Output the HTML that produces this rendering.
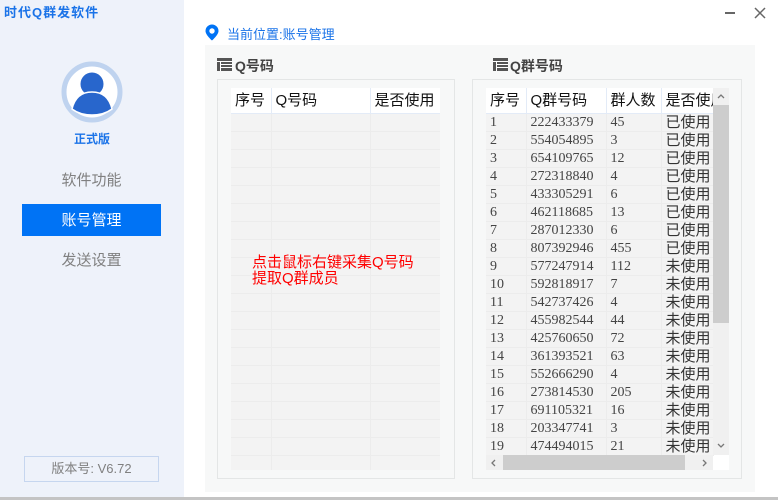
<!DOCTYPE html>
<html><head><meta charset="utf-8"><style>
*{margin:0;padding:0;box-sizing:border-box}
body{width:778px;height:500px;position:relative;overflow:hidden;background:#fff;font-family:"Liberation Sans","WenQuanYi Zen Hei","Noto Sans CJK SC",sans-serif}
.a{position:absolute}
.side{left:0;top:0;width:184px;height:497px;background:#eef2fa}
.nav{left:22px;width:139px;height:32px;line-height:33px;text-align:center;font-size:15px;color:#808080}
table{border-collapse:collapse;table-layout:fixed;font-family:"Liberation Serif","WenQuanYi Zen Hei",serif}
td,th{height:18px;font-size:14px;font-weight:normal;text-align:left;padding-left:4px;white-space:nowrap;overflow:hidden;color:#444;border-right:1px solid #ececec;border-bottom:1px solid #ececec;line-height:17px}
th{height:25px;background:#fff;color:#111;font-size:15px;border-right:1px solid #e3ebf7;border-bottom:1px solid #e3ebf7;font-family:"WenQuanYi Zen Hei",sans-serif}
td{background:#f3f3f3}
td.c{font-family:"WenQuanYi Zen Hei",sans-serif;font-size:15px;color:#333}
</style></head><body>
<div class="a side"></div>
<div class="a" style="left:4px;top:2px;font-size:13px;font-weight:bold;color:#1a73e8;letter-spacing:1px">时代Q群发软件</div>
<svg class="a" style="left:60px;top:60px" width="64" height="64" viewBox="0 0 64 64">
<circle cx="32" cy="32" r="28" fill="#fff" stroke="#bfd3ef" stroke-width="5"/>
<circle cx="32" cy="24" r="12.5" fill="#2866cc" stroke="#fff" stroke-width="2"/>
<path d="M12 49 Q16 32 32 32 Q48 32 52 49 Q44 55 32 55 Q20 55 12 49Z" fill="#2866cc" stroke="#fff" stroke-width="1.5"/>
</svg>
<div class="a" style="left:0;width:184px;top:130px;text-align:center;font-size:12px;font-weight:bold;color:#1a73e8">正式版</div>
<div class="a nav" style="top:164px">软件功能</div>
<div class="a nav" style="top:204px;background:#0073f5;color:#fff">账号管理</div>
<div class="a nav" style="top:244px">发送设置</div>
<div class="a" style="left:24px;top:456px;width:135px;height:26px;border:1px solid #c6d6ef;text-align:center;line-height:24px;font-size:13px;color:#808080">版本号: V6.72</div>
<div class="a" style="left:0;top:497px;width:778px;height:3px;background:#c4c4c4"></div>
<div class="a" style="left:725px;top:12px;width:10px;height:2px;background:#666"></div>
<svg class="a" style="left:754px;top:7px" width="12" height="12"><path d="M1 1L11 11M11 1L1 11" stroke="#666" stroke-width="1.5"/></svg>
<svg class="a" style="left:205px;top:24px" width="14" height="17" viewBox="0 0 14 17"><path d="M7 0.5A6.5 6.5 0 0 0 0.5 7C0.5 11 7 16.5 7 16.5S13.5 11 13.5 7A6.5 6.5 0 0 0 7 0.5Z" fill="#0073f5"/><circle cx="7" cy="7" r="2.7" fill="#fff"/></svg>
<div class="a" style="left:227px;top:24px;font-size:13px;color:#1a73e8">当前位置:账号管理</div>
<div class="a" style="left:205px;top:45px;width:550px;height:447px;background:#f7f8f8"></div>
<svg class="a" style="left:217px;top:58px" width="15" height="13"><rect width="15" height="13" fill="#555"/><rect x="0" y="3" width="15" height="1" fill="#fff"/><rect x="4" y="6" width="11" height="1" fill="#fff"/><rect x="4" y="9" width="11" height="1" fill="#fff"/><rect x="3" y="3" width="1" height="10" fill="#fff"/></svg>
<div class="a" style="left:235px;top:56px;font-size:14px;font-weight:bold;color:#444">Q号码</div>
<svg class="a" style="left:493px;top:58px" width="15" height="13"><rect width="15" height="13" fill="#555"/><rect x="0" y="3" width="15" height="1" fill="#fff"/><rect x="4" y="6" width="11" height="1" fill="#fff"/><rect x="4" y="9" width="11" height="1" fill="#fff"/><rect x="3" y="3" width="1" height="10" fill="#fff"/></svg>
<div class="a" style="left:510px;top:56px;font-size:14px;font-weight:bold;color:#444">Q群号码</div>
<div class="a" style="left:217px;top:79px;width:238px;height:400px;border:1px solid #e4e6e6"></div>
<div class="a" style="left:472px;top:79px;width:270px;height:400px;border:1px solid #e4e6e6"></div>
<div class="a" style="left:231px;top:88px;width:209px;height:382px;background:#f3f3f3;overflow:hidden">
<table style="width:210px"><colgroup><col style="width:40px"><col style="width:99px"><col style="width:71px"></colgroup>
<tr><th>序号</th><th>Q号码</th><th>是否使用</th></tr>
<tr><td></td><td></td><td></td></tr><tr><td></td><td></td><td></td></tr><tr><td></td><td></td><td></td></tr><tr><td></td><td></td><td></td></tr><tr><td></td><td></td><td></td></tr><tr><td></td><td></td><td></td></tr><tr><td></td><td></td><td></td></tr><tr><td></td><td></td><td></td></tr><tr><td></td><td></td><td></td></tr><tr><td></td><td></td><td></td></tr><tr><td></td><td></td><td></td></tr><tr><td></td><td></td><td></td></tr><tr><td></td><td></td><td></td></tr><tr><td></td><td></td><td></td></tr><tr><td></td><td></td><td></td></tr><tr><td></td><td></td><td></td></tr><tr><td></td><td></td><td></td></tr><tr><td></td><td></td><td></td></tr><tr><td></td><td></td><td></td></tr><tr><td></td><td></td><td></td></tr>
</table></div>
<div class="a" style="left:252px;top:255px;font-size:15px;line-height:16px;color:#f00;font-family:'WenQuanYi Zen Hei',sans-serif">点击鼠标右键采集Q号码<br>提取Q群成员</div>
<div class="a" style="left:486px;top:88px;width:243px;height:382px;background:#fff;overflow:hidden">
<table style="width:227px"><colgroup><col style="width:40px"><col style="width:80px"><col style="width:55px"><col style="width:52px"></colgroup>
<tr><th>序号</th><th>Q群号码</th><th>群人数</th><th>是否使用</th></tr>
<tr><td>1</td><td>222433379</td><td>45</td><td class="c">已使用</td></tr>
<tr><td>2</td><td>554054895</td><td>3</td><td class="c">已使用</td></tr>
<tr><td>3</td><td>654109765</td><td>12</td><td class="c">已使用</td></tr>
<tr><td>4</td><td>272318840</td><td>4</td><td class="c">已使用</td></tr>
<tr><td>5</td><td>433305291</td><td>6</td><td class="c">已使用</td></tr>
<tr><td>6</td><td>462118685</td><td>13</td><td class="c">已使用</td></tr>
<tr><td>7</td><td>287012330</td><td>6</td><td class="c">已使用</td></tr>
<tr><td>8</td><td>807392946</td><td>455</td><td class="c">已使用</td></tr>
<tr><td>9</td><td>577247914</td><td>112</td><td class="c">未使用</td></tr>
<tr><td>10</td><td>592818917</td><td>7</td><td class="c">未使用</td></tr>
<tr><td>11</td><td>542737426</td><td>4</td><td class="c">未使用</td></tr>
<tr><td>12</td><td>455982544</td><td>44</td><td class="c">未使用</td></tr>
<tr><td>13</td><td>425760650</td><td>72</td><td class="c">未使用</td></tr>
<tr><td>14</td><td>361393521</td><td>63</td><td class="c">未使用</td></tr>
<tr><td>15</td><td>552666290</td><td>4</td><td class="c">未使用</td></tr>
<tr><td>16</td><td>273814530</td><td>205</td><td class="c">未使用</td></tr>
<tr><td>17</td><td>691105321</td><td>16</td><td class="c">未使用</td></tr>
<tr><td>18</td><td>203347741</td><td>3</td><td class="c">未使用</td></tr>
<tr><td>19</td><td>474494015</td><td>21</td><td class="c">未使用</td></tr>
</table>
<div class="a" style="left:227px;top:0;width:16px;height:367px;background:#f0f0f0"></div>
<div class="a" style="left:227px;top:17px;width:16px;height:218px;background:#cdcdcd"></div>
<svg class="a" style="left:231px;top:5px" width="8" height="6"><path d="M1 5L4 2L7 5" stroke="#777" stroke-width="1.3" fill="none"/></svg>
<svg class="a" style="left:231px;top:355px" width="8" height="6"><path d="M1 1L4 4L7 1" stroke="#777" stroke-width="1.3" fill="none"/></svg>
<div class="a" style="left:0;top:367px;width:227px;height:15px;background:#f0f0f0"></div>
<div class="a" style="left:17px;top:367px;width:182px;height:15px;background:#cdcdcd"></div>
<svg class="a" style="left:4px;top:371px" width="6" height="8"><path d="M5 1L2 4L5 7" stroke="#777" stroke-width="1.3" fill="none"/></svg>
<svg class="a" style="left:216px;top:371px" width="6" height="8"><path d="M1 1L4 4L1 7" stroke="#777" stroke-width="1.3" fill="none"/></svg>
</div>
</body></html>
